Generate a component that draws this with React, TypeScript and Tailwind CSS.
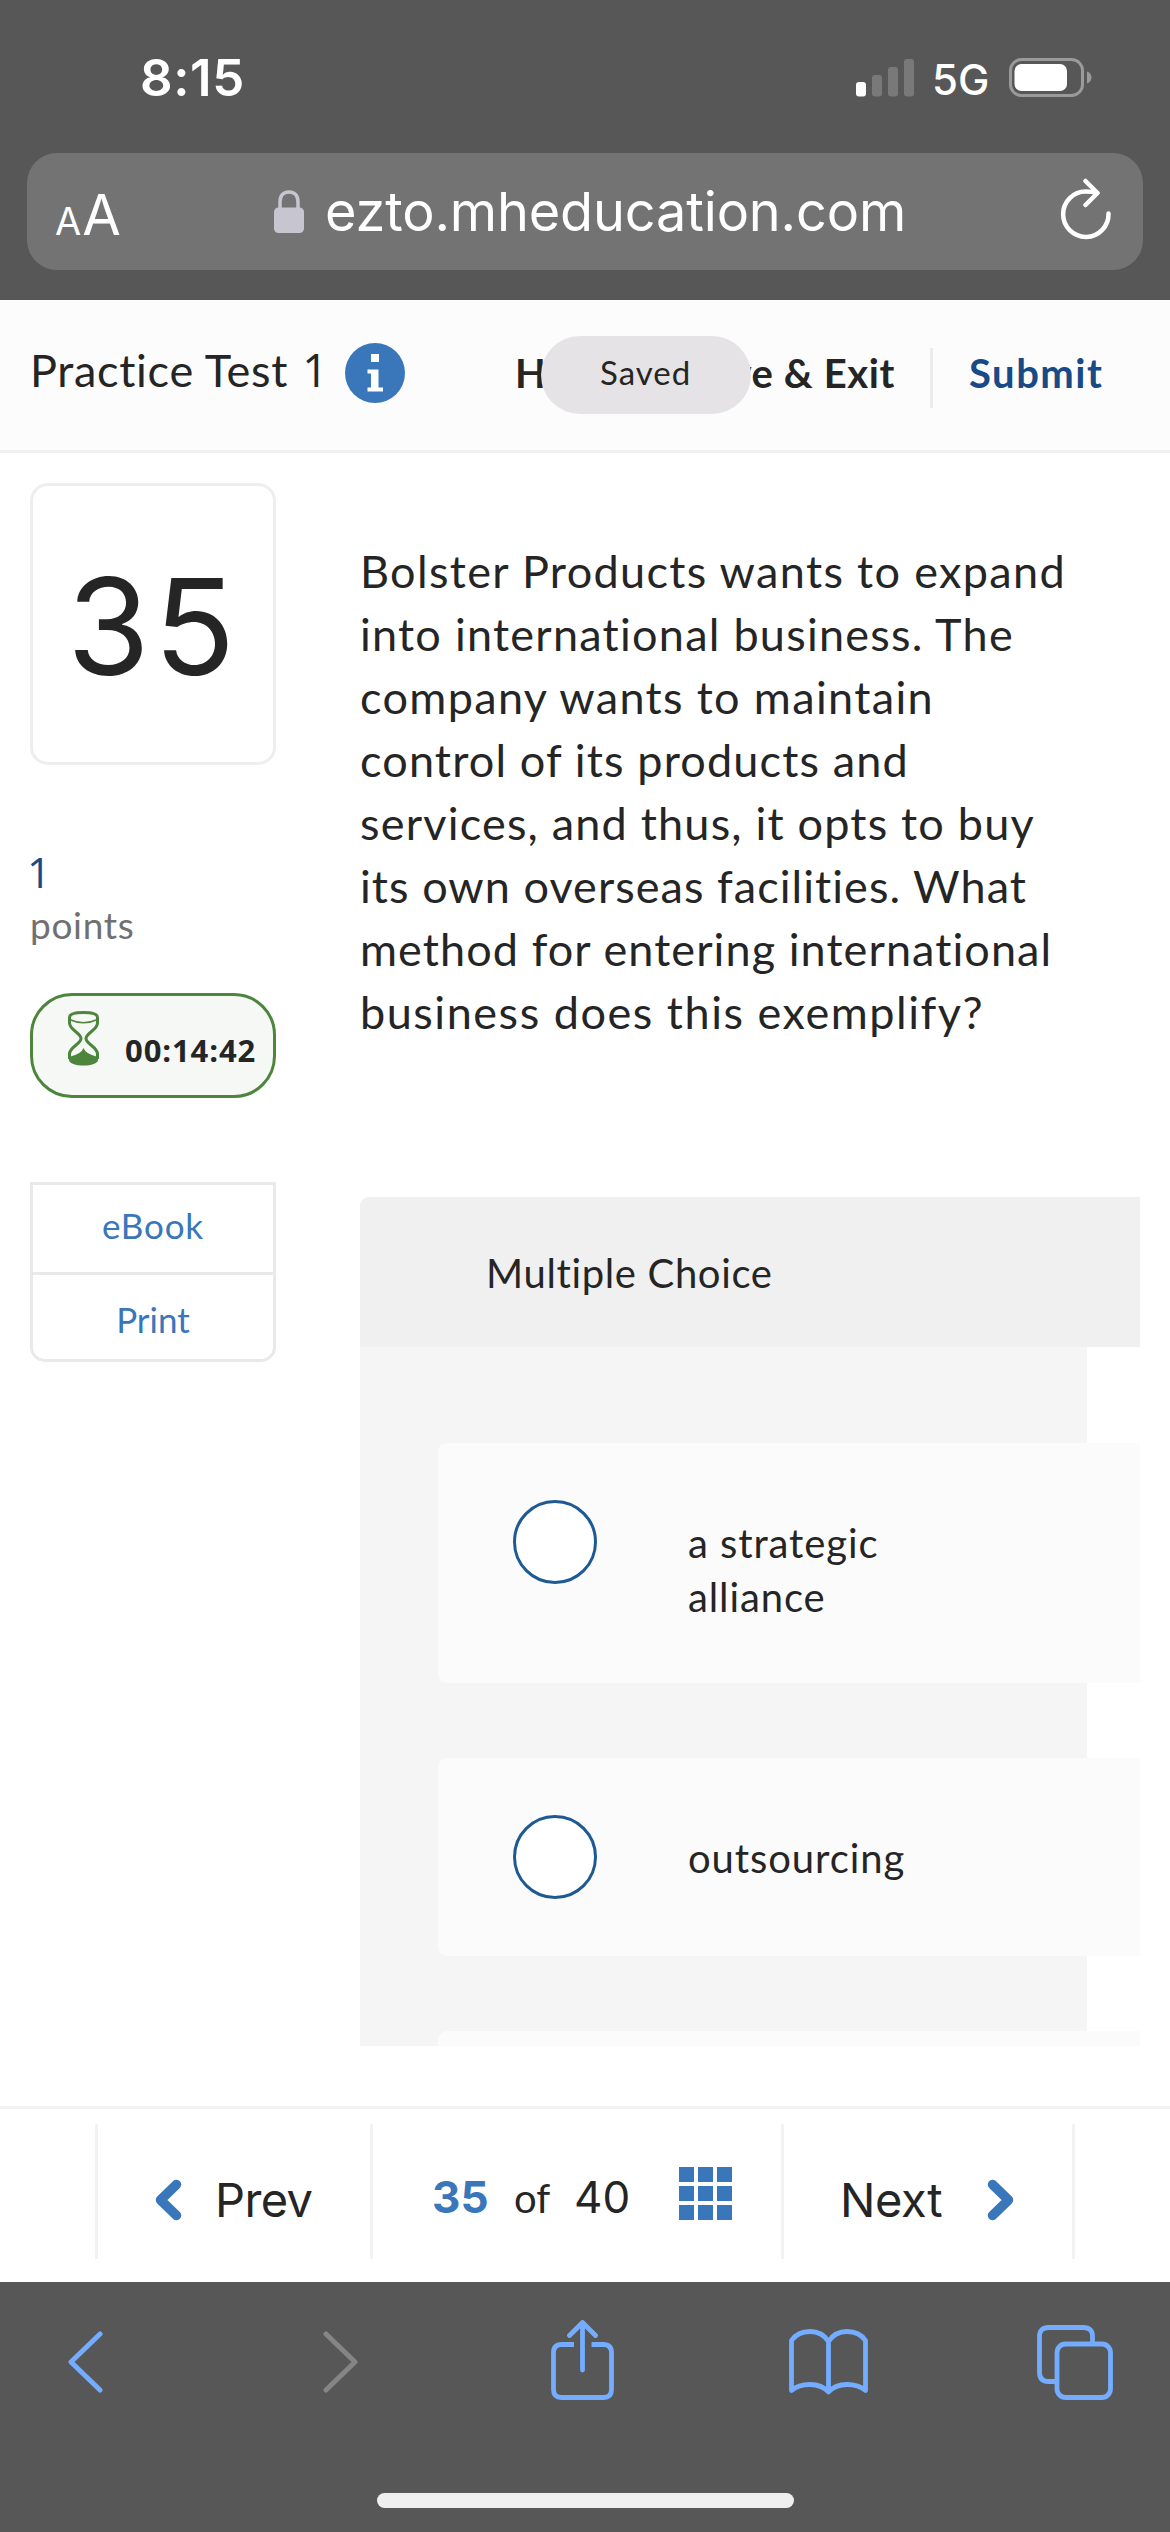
import React from "react";

const questionLines = [
  { text: "Bolster Products wants to expand", spacing: "tracking-[1.35px]" },
  { text: "into international business. The", spacing: "tracking-[1.25px]" },
  { text: "company wants to maintain", spacing: "tracking-[1.35px]" },
  { text: "control of its products and", spacing: "tracking-[1.15px]" },
  { text: "services, and thus, it opts to buy", spacing: "tracking-[1.2px]" },
  { text: "its own overseas facilities. What", spacing: "tracking-[1.05px]" },
  { text: "method for entering international", spacing: "tracking-[1.08px]" },
  { text: "business does this exemplify?", spacing: "tracking-[1.53px]" },
];

function StatusBar() {
  return (
    <div className="flex h-[153px] items-start font-['Inter',sans-serif] text-white">
      <span className="mt-[52px] ml-[140px] text-[51px] leading-[52px] font-semibold tracking-[0.6px]">8:15</span>
      <svg className="mt-[59px] ml-auto h-[38px] w-[58px]" viewBox="0 0 58 38">
        <rect x="0" y="23" width="10" height="14.5" rx="3" fill="#fff" />
        <rect x="16" y="16" width="10" height="21.5" rx="3" fill="#797979" />
        <rect x="32" y="8" width="10" height="29.5" rx="3" fill="#797979" />
        <rect x="48" y="0" width="10" height="37.5" rx="3" fill="#797979" />
      </svg>
      <span className="mt-[59px] ml-[18px] w-[59px] text-[42px] leading-[42px] font-medium whitespace-nowrap">5G</span>
      <svg className="mt-[58px] mr-[78px] ml-[18px] h-[39px] w-[83px]" viewBox="0 0 83 39">
        <rect x="1.5" y="1.5" width="72" height="36" rx="11" fill="none" stroke="#9a9a9a" strokeWidth="3" />
        <rect x="5.5" y="6" width="52.5" height="27" rx="7" fill="#fff" />
        <path d="M78 13.5c3 1 4.500 3.500 4.500 6s-1.500 5-4.500 6z" fill="#9a9a9a" />
      </svg>
    </div>
  );
}

function AddressBar() {
  return (
    <div className="mx-[27px] flex h-[117px] items-center rounded-[30px] bg-[#737373] font-['Inter',sans-serif] text-white">
      <span className="ml-7 flex h-[70px] w-[219px] items-baseline pt-[3px] leading-[70px] whitespace-nowrap">
        <span className="text-[38px] tracking-[1px]">A</span>
        <span className="text-[56px]">A</span>
      </span>
      <svg className="h-[43px] w-[30px]" viewBox="0 0 30 43">
        <path d="M6 20V12C6 5.500 9.500 2 15 2s9 3.500 9 10v8" fill="none" stroke="#c7c6d0" strokeWidth="3.500" />
        <rect x="0" y="17.500" width="30" height="25.500" rx="4.500" fill="#c7c6d0" />
      </svg>
      <span className="ml-[21px] w-[585px] text-[54px] leading-[60px] tracking-[-0.15px] whitespace-nowrap">ezto.mheducation.com</span>
      <svg className="mb-[5px] ml-[150px] h-[62px] w-[52px]" viewBox="0 0 52 62" fill="none" stroke="#fff" strokeWidth="4.500" strokeLinecap="round" strokeLinejoin="round">
        <path d="M48.500 35.500A22.700 22.700 0 1 1 26 13.500q6 0 11 1.500" />
        <path d="M25.500 3 37.500 15 25.500 27" />
      </svg>
    </div>
  );
}

function TestHeader() {
  return (
    <header className="relative flex h-[153px] items-start border-b-[3px] border-[#f0f0f0] bg-[#fcfcfc] text-[#252525]">
      <h1 className="mt-[43px] ml-[30px] w-[315px] text-[45px] leading-[54px] tracking-[0.7px] whitespace-nowrap">
        Practice Test <span className="ml-[2px] font-['Open_Sans',sans-serif] leading-none">1</span>
      </h1>
      <svg className="mt-[43px] h-[60px] w-[60px]" viewBox="0 0 60 60">
        <circle cx="30" cy="30" r="30" fill="#3a76ba" />
        <path d="M26 11h8v8h-8zM22.500 26.500H33.500V44.500H38v4H22.500v-4H26V30.500h-3.500z" fill="#fff" />
      </svg>
      <nav className="mt-[48px] ml-[110px] flex items-start text-[40px] leading-[40px] font-bold whitespace-nowrap">
        <div className="mt-[5px] flex w-[380px] justify-between">
          <span className="tracking-[0.5px]">Help</span>
          <span className="tracking-[0.6px]">Save &amp; Exit</span>
        </div>
        <span className="ml-[35px] h-[60px] w-[3px] bg-[#ececec]" />
        <span className="mt-[5px] ml-[36px] tracking-[1.5px] text-[#174a86]">Submit</span>
      </nav>
      <div className="absolute top-[36px] left-[541px] flex h-[78px] w-[210px] items-center rounded-[39px] bg-[#e5e3e6] pb-[5px] pl-[59px] text-[33px] tracking-[1px]">
        Saved
      </div>
    </header>
  );
}

function Sidebar() {
  return (
    <aside className="ml-[30px] w-[246px] shrink-0 pt-[30px] whitespace-nowrap">
      <div className="flex h-[282px] items-center rounded-[18px] border-[3px] border-[#eeeeee] pl-[34px] pt-[3px] font-['Inter',sans-serif] text-[134px] leading-none tracking-[4px] text-[#252525]">
        35
      </div>
      <p className="mt-[86px] -ml-[3px] font-['Open_Sans',sans-serif] text-[42px] leading-[42px] text-[#174a86]">1</p>
      <p className="mt-[11px] text-[37px] leading-[42px] tracking-[0.7px] text-[#707070]">points</p>
      <div className="mt-[47px] flex h-[105px] items-start rounded-[42px] border-[3px] border-[#4d853d] bg-[#f6f8f5] pl-[35px]">
        <svg className="mt-[15px] h-[55px] w-[31px]" viewBox="0 0 31 55" fill="none" stroke="#4d853d">
          <path d="M1.500 6C2 3 8 1.500 15.500 1.500S29 3 29.500 6" strokeWidth="3" />
          <path d="M1.500 8.500Q15.500 15 29.500 8.500" strokeWidth="1.500" />
          <path d="M1.500 6V12C1.500 19 13 22 13 27.500S1.500 36 1.500 43v5M29.500 6V12C29.500 19 18 22 18 27.500S29.500 36 29.500 43v5" strokeWidth="3" />
          <path d="M1 46Q13.500 43 15.500 37 17.500 43 30 46V49C30 52.500 23 54.500 15.500 54.500S1 52.500 1 49z" fill="#4d853d" stroke="none" />
        </svg>
        <span className="mt-[38px] ml-[26px] font-['Open_Sans',sans-serif] text-[31px] leading-[32px] font-bold tracking-[0.9px] text-[#252525]">
          00:14:42
        </span>
      </div>
      <div className="mt-[84px] flex h-[180px] flex-col rounded-b-[15px] border-[3px] border-[#e9e9e9] text-[35px] text-[#3a76ba]">
        <a className="flex h-[90px] items-center justify-center border-b-[3px] border-[#e9e9e9] pb-[6px] tracking-[0.8px]">eBook</a>
        <a className="flex h-[84px] items-center justify-center pt-[5px]">Print</a>
      </div>
    </aside>
  );
}

function Choice({ lines, size }: { lines: string[]; size: string }) {
  return (
    <div className={"flex w-[702px] items-start rounded-l-[9px] bg-[#fbfbfb] " + size}>
      {lines.length > 0 && (
        <>
          <span className="mt-[57px] ml-[75px] h-[84px] w-[84px] shrink-0 rounded-full border-[3px] border-[#1d5a94] bg-white" />
          <div className="mt-[73px] ml-[91px] text-[40px] leading-[54px] tracking-[0.9px] whitespace-nowrap">
            {lines.map((line) => (
              <p key={line}>{line}</p>
            ))}
          </div>
        </>
      )}
    </div>
  );
}

function Question() {
  return (
    <main className="ml-[84px] w-[780px] pt-[87px] text-[#252525]">
      <div className="text-[45px] leading-[63px] whitespace-nowrap">
        {questionLines.map((line) => (
          <p key={line.text} className={line.spacing}>
            {line.text}
          </p>
        ))}
      </div>
      <div className="mt-[153px] flex h-[150px] items-center rounded-tl-[9px] bg-[#f0f0f0] pt-[2px] pl-[126px] text-[40px] tracking-[0.65px]">
        Multiple Choice
      </div>
      <div className="flex h-[699px] w-[727px] flex-col gap-[75px] bg-[#f5f5f5] pt-[96px] pl-[78px]">
        <Choice lines={["a strategic", "alliance"]} size="h-[240px]" />
        <Choice lines={["outsourcing"]} size="h-[198px]" />
        <Choice lines={[]} size="h-[15px] rounded-bl-none" />
      </div>
    </main>
  );
}

function Pager() {
  return (
    <div className="h-[176px] border-t-[3px] border-[#f2f2f2] pt-[15px] whitespace-nowrap text-[#252525]">
      <div className="ml-[95px] flex h-[135px]">
        <div className="flex w-[275px] items-start border-l-[3px] border-[#f2f2f2] pl-[57px]">
          <svg className="mt-[55px] h-[42px] w-[27px]" viewBox="0 0 27 42" fill="none" stroke="#3a76ba" strokeWidth="9.500" strokeLinecap="round">
            <path d="M21.500 5.500 5.500 21l16 15.500" strokeLinejoin="round" />
          </svg>
          <span className="mt-[52px] ml-[33px] font-['Inter',sans-serif] text-[47px] leading-[48px] tracking-[-0.6px]">Prev</span>
        </div>
        <div className="flex w-[411px] items-start border-l-[3px] border-[#f2f2f2] pl-[59px]">
          <div className="mt-[50px] flex items-baseline leading-[46px]">
            <span className="w-[82px] font-['Inter',sans-serif] text-[44px] font-bold text-[#3a76ba]">35</span>
            <span className="w-[60px] text-[40px]">of</span>
            <span className="w-[105px] font-['Inter',sans-serif] text-[44px]">40</span>
          </div>
          <div className="mt-[43px] grid h-[53px] w-[53px] grid-cols-3 gap-[4px]">
            {[0, 1, 2, 3, 4, 5, 6, 7, 8].map((cell) => (
              <span key={cell} className="bg-[#3a76ba]" />
            ))}
          </div>
        </div>
        <div className="flex w-[294px] items-start border-x-[3px] border-[#f2f2f2] pl-[56px]">
          <span className="mt-[52px] w-[147px] font-['Inter',sans-serif] text-[47px] leading-[48px] tracking-[-0.4px]">Next</span>
          <svg className="mt-[55px] h-[42px] w-[27px]" viewBox="0 0 27 42" fill="none" stroke="#3a76ba" strokeWidth="9.500" strokeLinecap="round">
            <path d="M5.500 5.500 21.500 21l-16 15.500" strokeLinejoin="round" />
          </svg>
        </div>
      </div>
    </div>
  );
}

function BrowserToolbar() {
  return (
    <footer className="h-[250px] bg-[#575757] pt-[38px]">
      <div className="flex h-[84px] items-center">
        <svg className="ml-[68px] h-[62px] w-[35px]" viewBox="0 0 35 62" fill="none" stroke="#74acff" strokeWidth="5" strokeLinecap="round" strokeLinejoin="round">
          <path d="M32 3 3 31l29 28" />
        </svg>
        <svg className="ml-[220px] h-[62px] w-[35px]" viewBox="0 0 35 62" fill="none" stroke="#858585" strokeWidth="5" strokeLinecap="round" strokeLinejoin="round">
          <path d="M3 3l29 28L3 59" />
        </svg>
        <svg className="mb-[4px] ml-[193px] h-[80px] w-[63px]" viewBox="0 0 63 80" fill="none" stroke="#74acff" strokeWidth="4.800">
          <path d="M23 24.500H10.500q-8 0-8 8V69.500q0 8 8 8h42q8 0 8-8V32.500q0-8-8-8H40.500" />
          <path d="M31.500 50V3M18.500 15.500l13-13 13 13" strokeLinecap="round" strokeLinejoin="round" />
        </svg>
        <svg className="ml-[175px] h-[66px] w-[79px]" viewBox="0 0 79 66" fill="none" stroke="#74acff" strokeWidth="4.800" strokeLinecap="round" strokeLinejoin="round">
          <path d="M39.500 12.500C35 5.500 28.500 2.500 21 2.500S7 5 2.500 11.500V61.500C7 57.500 14 55.500 21 55.500s14 2.500 18.500 7.500C44 58 51 55.500 58 55.500s14 2 18.500 6V11.500C72 5 65.500 2.500 58 2.500S44 5.500 39.500 12.500V63" />
        </svg>
        <svg className="ml-[169px] h-[75px] w-[76px]" viewBox="0 0 76 75" fill="none" stroke="#74acff" strokeWidth="4.800">
          <path d="M55.500 18V11.500q0-9-9-9h-35q-9 0-9 9v36q0 9 9 9H19" />
          <rect x="20" y="19" width="53.500" height="53.500" rx="8.500" />
        </svg>
      </div>
      <div className="mt-[89px] ml-[377px] h-[15px] w-[417px] rounded-full bg-[#efefef]" />
    </footer>
  );
}

export default function App() {
  return (
    <div className="flex h-[2532px] w-[1170px] flex-col overflow-hidden bg-white font-['Lato',sans-serif]">
      <div className="h-[300px] bg-[#575757]">
        <StatusBar />
        <AddressBar />
      </div>
      <TestHeader />
      <div className="flex h-[1653px]">
        <Sidebar />
        <Question />
      </div>
      <Pager />
      <BrowserToolbar />
    </div>
  );
}
